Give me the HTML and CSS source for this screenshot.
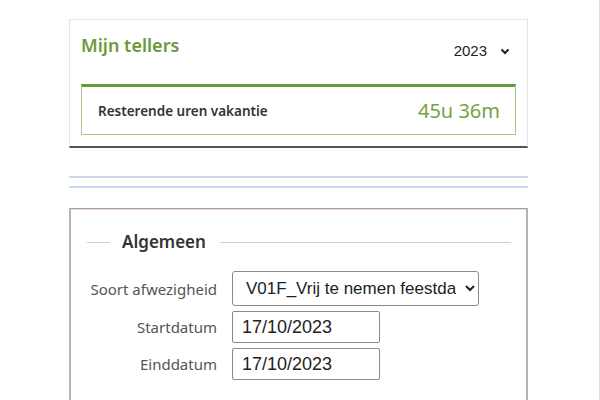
FILE: index.html
```html
<!DOCTYPE html>
<html lang="nl">
<head>
    <meta charset="UTF-8">
    <meta name="viewport" content="width=device-width, initial-scale=1.0">
    <title>Afwezigheid</title>
    <link rel="stylesheet" href="styles.css">
</head>
<body>
    <div class="screen">
        <div class="page">
            <div class="counters">
                <div class="counters-header">
                    <h2 class="counters-title">Mijn tellers</h2>
                    <div class="year">2023
                        <svg width="10" height="8" viewBox="0 0 10 8"><path d="M1.5 2.5 L5 6 L8.5 2.5" fill="none" stroke="#222" stroke-width="2"/></svg>
                    </div>
                </div>
                <div class="counter">
                    <span class="counter-label">Resterende uren vakantie</span>
                    <span class="counter-value">45u 36m</span>
                </div>
            </div>

            <div class="rules">
                <div class="rule"></div>
                <div class="rule"></div>
            </div>

            <div class="form-card">
                <div class="legend">Algemeen</div>
                <div class="form-grid">
                    <label for="soort">Soort afwezigheid</label>
                    <select id="soort" class="select">
                        <option>V01F_Vrij te nemen feestdag</option>
                    </select>
                    <label for="start">Startdatum</label>
                    <input id="start" class="date-input" type="text" value="17/10/2023">
                    <label for="eind">Einddatum</label>
                    <input id="eind" class="date-input" type="text" value="17/10/2023">
                </div>
            </div>
        </div>
    </div>
</body>
</html>
```
FILE: styles.css
```css
body {
    margin: 0;
    font-family: "Noto Sans", "Open Sans", sans-serif;
    color: #333;
    background: #fff;
}
.screen {
    width: 599px;
    height: 400px;
    border-right: 1px solid #dcdcdc;
    overflow: hidden;
}
.page {
    margin-left: 69px;
    padding-top: 19px;
    width: 459px;
}
.counters {
    border: 1px solid #e4e4e4;
    border-bottom: 2px solid #555;
    padding: 12px 11px 11px;
}
.counters-header {
    display: flex;
    justify-content: space-between;
    align-items: flex-start;
    height: 52px;
}
.counters-title {
    margin: 0;
    font-size: 18px;
    font-weight: 600;
    line-height: 26px;
    color: #6b9a3b;
}
.year {
    margin-top: 10px;
    margin-right: 6px;
    font-family: "Liberation Sans", Arial, sans-serif;
    font-size: 15px;
    color: #222;
    display: flex;
    align-items: center;
    gap: 13px;
}
.counter {
    display: flex;
    justify-content: space-between;
    align-items: center;
    height: 47px;
    border: 1px solid #a6c989;
    border-top: 3px solid #6b9a3b;
    padding: 0 15px 0 16px;
}
.counter-label {
    font-size: 13.5px;
    font-weight: 600;
    color: #333;
}
.counter-value {
    font-size: 20px;
    color: #74a33f;
}
.rules {
    padding-top: 28px;
}
.rule {
    height: 2px;
    background: #c9d6ec;
    margin-bottom: 8px;
}
.form-card {
    margin-top: 20px;
    border: 2px solid #b3b3b3;
    border-top: 1px solid #a0a0a0;
    box-shadow: inset 0 1px #f6d9d9;
    padding: 21px 15px 20px 16px;
    min-height: 200px;
}
.legend {
    display: flex;
    align-items: center;
    gap: 12px;
    font-size: 17px;
    font-weight: 600;
    color: #333;
    line-height: 24px;
}
.legend::before {
    content: "";
    width: 23px;
    border-top: 1px solid #cfcfcf;
}
.legend::after {
    content: "";
    flex: 1;
    border-top: 1px solid #cfcfcf;
    margin-left: 2px;
}
.form-grid {
    display: grid;
    grid-template-columns: 130px auto;
    column-gap: 15px;
    row-gap: 5px;
    align-items: center;
    justify-items: start;
    margin-top: 17px;
}
.form-grid label {
    justify-self: end;
    font-size: 15px;
    color: #555;
}
.select {
    width: 247px;
    height: 35px;
    padding: 0 6px 0 9px;
    font-family: "Liberation Sans", Arial, sans-serif;
    font-size: 17px;
    color: #222;
    border: 1px solid #8a8a8a;
    border-radius: 3px;
    background: #fff;
}
.date-input {
    width: 148px;
    height: 32px;
    box-sizing: border-box;
    padding: 0 9px;
    font-family: "Liberation Sans", Arial, sans-serif;
    font-size: 18px;
    color: #222;
    border: 1px solid #8a8a8a;
    border-radius: 2px;
}
```
